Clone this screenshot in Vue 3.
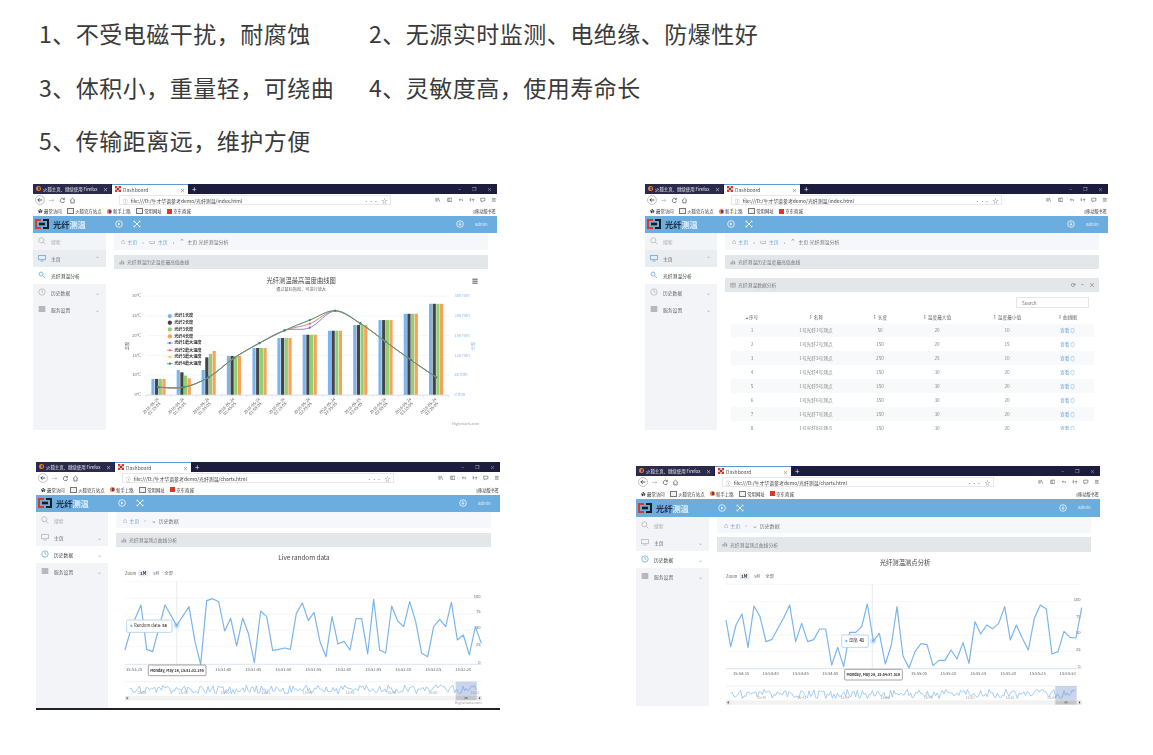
<template>
  <div class="page">
    <div class="points">
      <p v-for="(t, i) in points" :key="i">{{ t }}</p>
    </div>

    <div v-for="(row, r) in rows" :key="r" class="shots" :class="'shots' + r">
      <div v-for="w in row" :key="w.id" class="win" :class="w.id">
        <div class="tabs">
          <div class="tab dark">
            <i class="fox"></i><span>火狐主页、继续使用 Firefox</span><b>×</b>
          </div>
          <div class="tab light">
            <svg class="fav" viewBox="0 0 10 10"><rect x="0" y="0" width="4" height="4" fill="#d8392b"/><rect x="6" y="0" width="4" height="4" fill="#d8392b"/><rect x="0" y="6" width="4" height="4" fill="#d8392b"/><rect x="6" y="6" width="4" height="4" fill="#d8392b"/><rect x="3.5" y="3.5" width="3" height="3" fill="#333"/></svg>
            <span>Dashboard</span><b>×</b>
          </div>
          <span class="plus">+</span>
          <div class="ctrl"><span>−</span><span>❐</span><span>×</span></div>
        </div>

        <div class="navbar">
          <svg class="back" viewBox="0 0 12 12"><circle cx="6" cy="6" r="5.4" fill="#fff" stroke="#999" stroke-width=".7"/><path d="M8.8 6H3.4M5.6 3.8 3.4 6l2.2 2.2" fill="none" stroke="#222" stroke-width=".9"/></svg>
          <svg class="nb" viewBox="0 0 12 12"><path d="M2 6h8M7.5 3.5 10 6l-2.5 2.5" fill="none" stroke="#aaa" stroke-width="1"/></svg>
          <svg class="nb" viewBox="0 0 12 12"><path d="M9.6 6.5A3.7 3.7 0 1 1 8.5 3.3M9.4 1.4v2.7H6.7" fill="none" stroke="#333" stroke-width="1"/></svg>
          <svg class="nb" viewBox="0 0 12 12"><path d="M1.5 6.2 6 2l4.5 4.2M3.2 5.5v4.7h5.6V5.5" fill="none" stroke="#333" stroke-width="1"/></svg>
          <div class="url">
            <span class="info">ⓘ</span><span>{{ w.url }}</span>
            <span class="grow"></span><span class="more">···</span><span class="star">☆</span>
          </div>
          <div class="tools">
            <svg v-for="(d, k) in toolIcons" :key="k" viewBox="0 0 12 12"><path :d="d" fill="none" stroke="#444" stroke-width="1.1"/></svg>
          </div>
        </div>

        <div class="marks">
          <span><em class="gear">✿</em>最常访问</span>
          <span><em class="folder"></em>火狐官方站点</span>
          <span><i class="fox"></i>新手上路</span>
          <span><em class="folder"></em>常用网址</span>
          <span><em class="jd"></em>京东商城</span>
          <span class="grow"></span>
          <span class="mobile">▯移动版书签</span>
        </div>

        <div class="head">
          <svg class="logo" viewBox="0 0 14 10"><path d="M6 1H1v8h5" fill="none" stroke="#d8392b" stroke-width="2"/><path d="M8 1h5v8H8" fill="none" stroke="#1c1c1c" stroke-width="2"/><rect x="4" y="3.7" width="6" height="2.6" fill="#1c1c1c"/></svg>
          <span class="brand">光纤<u>测温</u></span>
          <svg class="hi first" viewBox="0 0 12 12"><circle cx="6" cy="6" r="5" fill="none" stroke="#fff" stroke-width="1.1"/><path d="M4.7 3.7 7.8 6 4.7 8.3z" fill="#fff"/></svg>
          <svg class="hi" viewBox="0 0 12 12"><path d="M2 2l8 8M10 2l-8 8" stroke="#fff" stroke-width="1.3"/><path d="M1 1h3L1 4zM11 1H8l3 3zM1 11h3l-3-3zM11 11H8l3-3z" fill="#fff"/></svg>
          <span class="grow"></span>
          <svg class="hi" viewBox="0 0 12 12"><circle cx="6" cy="6" r="5" fill="none" stroke="#fff" stroke-width="1.1"/><path d="M6 2.8v5M3.8 5.8 6 8l2.2-2.2" fill="none" stroke="#fff" stroke-width="1.1"/></svg>
          <span class="admin">admin</span>
        </div>

        <div class="main">
          <aside class="side">
            <div class="item search">
              <svg class="si" viewBox="0 0 12 12"><circle cx="5" cy="5" r="3.8" fill="none" stroke="#aaa" stroke-width="1"/><path d="M8 8l3 3" stroke="#aaa" stroke-width="1"/></svg>
              <span class="lbl">搜索</span>
            </div>
            <div v-for="m in w.menu" :key="m.label" class="item" :class="{ on: m.on, sub: m.sub }">
              <svg class="si" viewBox="0 0 12 12">
                <g v-if="m.icon === 'screen'" fill="none" :stroke="m.blue ? '#4c9ad8' : '#aaa'" stroke-width="1"><rect x="1" y="2" width="10" height="6.6"/><path d="M3.5 10.5h5"/></g>
                <g v-else-if="m.icon === 'find'" fill="none" stroke="#6aa8dc" stroke-width="1.2"><circle cx="4.6" cy="4.6" r="3"/><path d="M7 7l3.8 3.8"/></g>
                <g v-else-if="m.icon === 'clock'" fill="none" :stroke="m.blue ? '#4c9ad8' : '#aaa'" stroke-width="1"><circle cx="6" cy="6" r="4.8"/><path d="M6 3v3l2 1"/></g>
                <rect v-else x="1" y="1.5" width="10" height="9" fill="#b5b9bd"/>
              </svg>
              <span class="lbl">{{ m.label }}</span>
              <span class="grow"></span>
              <span v-if="!m.tail" class="chev">{{ m.open ? '⌃' : '⌄' }}</span>
            </div>
          </aside>

          <section class="content">
            <div class="crumb">
              <span v-for="(c, k) in w.crumbs" :key="k" :class="{ link: c.link }"><i v-if="c.icon" class="cic">{{ c.icon }}</i>{{ c.text }}</span>
            </div>

            <div class="phead">
              <svg class="ph" viewBox="0 0 10 10"><path d="M1 9V5h1.6v4zM4 9V2h1.6v7zM7 9V4h1.6v5z" fill="#8c8f93"/></svg>
              <span>{{ w.panel }}</span>
            </div>

            <!-- 折线柱状图 -->
            <svg v-if="w.kind === 'combo'" class="chart" viewBox="12 -3 1125 483">
              <text x="575" y="37" class="tt" text-anchor="middle">光纤测温最高温度曲线图</text>
              <text x="575" y="63" class="sm" text-anchor="middle">通过鼠标拖松，可进行放大</text>
              <path d="M1090 27h16M1090 33h16M1090 39h16" stroke="#555" stroke-width="3"/>
              <g v-for="(g, k) in comboGrid" :key="k">
                <path :d="`M108 ${g.y}H1020`" stroke="#eef0f3" stroke-width="2"/>
                <text x="93" :y="g.y + 4" class="sm" text-anchor="end">{{ g.l }}</text>
                <text x="1036" :y="g.y + 4" class="sm blue">{{ g.r }}</text>
              </g>
              <text class="sm" transform="translate(56 228) rotate(-90)" text-anchor="middle">温度</text>
              <text class="sm blue" transform="translate(1098 228) rotate(-90)" text-anchor="middle">长度</text>
              <g v-for="b in comboBars" :key="b.id">
                <rect :x="b.x" :y="b.y" width="9.6" :height="375 - b.y" :fill="b.c" />
              </g>
              <path d="M108 376H1020" stroke="#ccd6eb" stroke-width="2"/>
              <path v-for="x in comboTicks" :key="x" :d="`M${x} 376v8`" stroke="#ccd6eb" stroke-width="1.5"/>
              <g v-for="s in comboLines" :key="s.c">
                <path :d="s.d" fill="none" :stroke="s.c" stroke-width="2.6"/>
                <circle v-for="(p, k) in s.pts" :key="k" :cx="p[0]" :cy="p[1]" r="3.4" :fill="s.c"/>
              </g>
              <g v-for="(l, k) in comboLabels" :key="k" :transform="`translate(${l.x} 389) rotate(-45)`">
                <text class="sm" text-anchor="end">2018-05-24</text>
                <text class="sm" y="13" x="-6" text-anchor="end">{{ l.t }}</text>
              </g>
              <g v-for="(l, k) in comboLegend" :key="k">
                <circle v-if="k < 4" cx="180" :cy="l.y" r="6.5" :fill="l.c"/>
                <g v-else><path :d="`M171 ${l.y}h18`" :stroke="l.c" stroke-width="2"/><circle cx="180" :cy="l.y" r="3.5" :fill="l.c"/></g>
                <text x="193" :y="l.y + 4" class="lg">{{ l.t }}</text>
              </g>
              <text x="1110" y="466" class="hc" text-anchor="end">Highcharts.com</text>
            </svg>

            <!-- 数据表 -->
            <template v-else-if="w.kind === 'table'">
              <div class="phead second">
                <svg class="ph" viewBox="0 0 10 10"><path d="M1 2h8v6.5H1zM1 4h8M3.8 2v6.5M6.4 2v6.5" fill="none" stroke="#8c8f93" stroke-width=".8"/></svg>
                <span>光纤测温数据分析</span>
                <span class="grow"></span>
                <span class="pbtn">⟳</span><span class="pbtn">−</span><span class="pbtn">×</span>
              </div>
              <div class="tbody">
                <div class="searchbox">Search</div>
                <table>
                  <colgroup><col v-for="c in colWidths" :key="c" :style="{ width: c + 'px' }"></colgroup>
                  <thead>
                    <tr><th v-for="(h, k) in columns" :key="h"><small>{{ k === 0 ? '▴' : '↕' }}</small> {{ h }}</th></tr>
                  </thead>
                  <tbody>
                    <tr v-for="(d, k) in tableRows" :key="k">
                      <td>{{ k + 1 }}</td>
                      <td>1号光纤{{ k + 1 }}号测点</td>
                      <td>{{ d[0] }}</td>
                      <td>{{ d[1] }}</td>
                      <td>{{ d[2] }}</td>
                      <td class="see">查看 ◎</td>
                    </tr>
                  </tbody>
                </table>
              </div>
            </template>

            <!-- 实时曲线 -->
            <svg v-else class="chart" :viewBox="w.live.box">
              <text :x="w.live.titleX" :y="w.live.titleY" class="tt" text-anchor="middle">{{ w.live.title }}</text>
              <text :x="w.live.x0" :y="w.live.btnY + 4" class="sm">Zoom</text>
              <rect :x="w.live.x0 + 40" :y="w.live.btnY - 9" width="30" height="18" fill="#e6ebf5"/>
              <text :x="w.live.x0 + 55" :y="w.live.btnY + 4" class="sm b" text-anchor="middle">1M</text>
              <text :x="w.live.x0 + 93" :y="w.live.btnY + 4" class="sm" text-anchor="middle">5M</text>
              <text :x="w.live.x0 + 131" :y="w.live.btnY + 4" class="sm" text-anchor="middle">全部</text>

              <path v-for="y in w.live.grid" :key="y" :d="`M${w.live.x0} ${y}H${w.live.x1}`" stroke="#eef0f3" stroke-width="1.6"/>
              <path :d="`M${w.live.x0} ${w.live.base}H${w.live.x1}`" stroke="#ccd6eb" stroke-width="2"/>
              <text v-for="(y, k) in [...w.live.grid.slice(1), w.live.base]" :key="'v' + k" :x="w.live.x1 - 3" :y="y - 2" class="sm" text-anchor="end">{{ 100 - k * 25 }}</text>
              <text v-for="l in w.live.xlabels" :key="l[1]" :x="l[0]" :y="w.live.base + 19" class="sm" text-anchor="middle">{{ l[1] }}</text>

              <path :d="`M${w.live.cross} ${w.live.grid[0]}V${w.live.base}`" stroke="#d8dbe0" stroke-width="1.6"/>
              <path :d="polyline(w.live.pts)" fill="none" stroke="#7cb5ec" stroke-width="3.6" stroke-linejoin="round"/>
              <circle :cx="w.live.mark[0]" :cy="w.live.mark[1]" r="10" fill="#7cb5ec" opacity=".25"/>
              <circle :cx="w.live.mark[0]" :cy="w.live.mark[1]" r="4" fill="#7cb5ec"/>

              <rect :x="w.live.tip[0]" :y="w.live.tip[1]" :width="w.live.tip[2]" height="37" rx="4" fill="#fff" stroke="#a9cdf0" stroke-width="2.4"/>
              <circle :cx="w.live.tip[0] + 14" :cy="w.live.tip[1] + 18" r="3.4" fill="#7cb5ec"/>
              <text :x="w.live.tip[0] + 22" :y="w.live.tip[1] + 22" class="sm dk">{{ w.live.tipName }}: <tspan class="b">{{ w.live.tipVal }}</tspan></text>

              <rect :x="w.live.time[0]" :y="w.live.base + 2" width="173" height="32" rx="3" fill="#fff" stroke="#777" stroke-width="2"/>
              <text :x="w.live.time[0] + 86" :y="w.live.base + 22" class="xs b" text-anchor="middle">{{ w.live.timeText }}</text>

              <path :d="`M${w.live.x0} ${w.live.nav}H${w.live.x1}`" stroke="#e6e8ec" stroke-width="1.6"/>
              <path :d="polyline(w.live.mini)" fill="none" stroke="#8fc0ee" stroke-width="2.4"/>
              <text v-for="l in w.live.navLabels" :key="l[1]" :x="l[0]" :y="w.live.nav + 38" class="xs gray" text-anchor="middle">{{ l[1] }}</text>
              <rect :x="w.live.sel[0]" :y="w.live.nav" :width="w.live.sel[1]" height="43" fill="#6685c2" opacity=".35"/>
              <rect :x="w.live.x0" :y="w.live.nav + 43" :width="w.live.x1 - w.live.x0" height="13" fill="#f2f2f2"/>
              <rect :x="w.live.sel[0]" :y="w.live.nav + 43" :width="w.live.sel[1]" height="13" fill="#c4c6ca"/>
              <rect :x="w.live.x0" :y="w.live.nav + 43" width="13" height="13" fill="#e4e4e4"/>
              <rect :x="w.live.x1 - 13" :y="w.live.nav + 43" width="13" height="13" fill="#e4e4e4"/>
              <path :d="`M${w.live.x0 + 8} ${w.live.nav + 46}l-4 3.5 4 3.5z`" fill="#333"/>
              <path :d="`M${w.live.x1 - 8} ${w.live.nav + 46}l4 3.5-4 3.5z`" fill="#333"/>
              <path :d="`M${w.live.sel[0] + w.live.sel[1] / 2 - 5} ${w.live.nav + 47.5}h10M${w.live.sel[0] + w.live.sel[1] / 2 - 5} ${w.live.nav + 50.5}h10`" stroke="#555" stroke-width="1.4"/>
              <text v-if="w.id === 'w3'" x="1115" y="401" class="hc" text-anchor="end">Highcharts.com</text>
            </svg>
          </section>
        </div>
      </div>
    </div>
  </div>
</template>

<script setup>
const points = [
  '1、不受电磁干扰，耐腐蚀',
  '2、无源实时监测、电绝缘、防爆性好',
  '3、体积小，重量轻，可绕曲',
  '4、灵敏度高，使用寿命长',
  '5、传输距离远，维护方便',
]

const toolIcons = [
  'M2 2v8M4.5 2v8M7 2l3 8',
  'M1.5 2.5h9v7h-9zM4.5 2.5v7',
  'M10 9V6H3M5 3.5 2.5 6 5 8.5',
  'M3 2v6l-2-2M3 8l2-2M9 10V4l-2 2M9 4l2 2',
  'M1.5 2.5h9v6H6l-2.5 2V8.5h-2z',
  'M2 3h8M2 6h8M2 9h8',
]

const polyline = (pts) => 'M' + pts.map((p) => p.join(' ')).join('L')

// catmull-rom 平滑
const smooth = (pts) => {
  let d = `M${pts[0][0]} ${pts[0][1]}`
  for (let i = 0; i < pts.length - 1; i++) {
    const p0 = pts[i - 1] || pts[i]
    const p1 = pts[i]
    const p2 = pts[i + 1]
    const p3 = pts[i + 2] || p2
    const c1 = [p1[0] + (p2[0] - p0[0]) / 6, p1[1] + (p2[1] - p0[1]) / 6]
    const c2 = [p2[0] - (p3[0] - p1[0]) / 6, p2[1] - (p3[1] - p1[1]) / 6]
    d += `C${c1[0]} ${c1[1]} ${c2[0]} ${c2[1]} ${p2[0]} ${p2[1]}`
  }
  return d
}

const comboGrid = [
  { y: 78, l: '30°C', r: '300 mm' },
  { y: 138, l: '25°C', r: '240 mm' },
  { y: 197, l: '20°C', r: '180 mm' },
  { y: 256, l: '15°C', r: '120 mm' },
  { y: 315, l: '10°C', r: '60 mm' },
  { y: 375, l: '0°C', r: '0 mm' },
]
const centers = [146, 222, 297, 373, 450, 525, 601, 677, 753, 829, 905, 981]
const tops = [
  [327, 327, 327, 327],
  [300, 307, 317, 325],
  [300, 262, 252, 243],
  [258, 258, 258, 258],
  [234, 234, 234, 234],
  [204, 204, 204, 204],
  [194, 194, 194, 194],
  [182, 182, 182, 182],
  [165, 165, 165, 165],
  [150, 150, 150, 150],
  [131, 131, 131, 131],
  [101, 101, 101, 101],
]
const barColors = ['#7cb5ec', '#434348', '#90d070', '#f7a35c']
const comboBars = centers.flatMap((x, g) =>
  tops[g].map((y, k) => ({ id: g + '-' + k, x: x - 21.5 + k * 11, y, c: barColors[k] })),
)
const comboTicks = [108, 184, 260, 336, 412, 488, 563, 639, 715, 791, 867, 943, 1019]
const lineY = [352, 352, 322, 264, 219, 181, 150, 122, 160, 215, 270, 322]
const comboLines = [
  { c: '#7070cc', at6: 173 },
  { c: '#e8607c', at6: 161 },
  { c: '#e8c94a', at6: 150 },
  { c: '#2f8f86', at6: 150 },
].map((s) => {
  const pts = centers.map((x, i) => [x, i === 6 ? s.at6 : lineY[i]])
  return { c: s.c, pts, d: smooth(pts) }
})
const times = ['01:15:05', '01:25:05', '01:35:05', '01:45:05', '01:55:05', '02:15:05', '02:25:05', '02:35:05', '02:45:05', '02:55:05', '03:15:05', '03:25:05']
const comboLabels = centers.map((x, i) => ({ x: x + 2, t: times[i] }))
const comboLegend = [
  { y: 138, c: '#7cb5ec', t: '光纤1长度' },
  { y: 158, c: '#434348', t: '光纤2长度' },
  { y: 178, c: '#90d070', t: '光纤3长度' },
  { y: 199, c: '#f7a35c', t: '光纤4长度' },
  { y: 219, c: '#7070cc', t: '光纤1最大温度' },
  { y: 241, c: '#e8607c', t: '光纤2最大温度' },
  { y: 261, c: '#e8c94a', t: '光纤3最大温度' },
  { y: 281, c: '#2f8f86', t: '光纤4最大温度' },
]

const columns = ['序号', '名称', '长度', '温度最大值', '温度最小值', '曲线图']
const colWidths = [42, 86, 42, 72, 68, 53]
const tableRows = [
  [50, 20, 10],
  [150, 20, 15],
  [250, 25, 10],
  [350, 30, 20],
  [350, 30, 20],
  [350, 30, 20],
  [350, 30, 20],
  [350, 30, 20],
]

const noise = (i) => {
  const v = Math.sin(i * 12.9898 + 4.1) * 43758.5453
  return v - Math.floor(v)
}
const miniLine = (x0, x1, top, bottom) => {
  const pts = []
  for (let x = x0 + 14, i = 0; x <= x1 - 14; x += 5, i++) {
    pts.push([x, +(top + noise(i) * (bottom - top)).toFixed(1)])
  }
  return pts
}

const ys3 = [240, 170, 105, 238, 245, 105, 167, 110, 215, 283, 92, 86, 95, 183, 145, 228, 145, 190, 278, 123, 140, 241, 238, 234, 238, 130, 99, 152, 127, 215, 260, 140, 222, 214, 240, 146, 146, 252, 88, 240, 249, 108, 153, 170, 95, 155, 250, 260, 170, 148, 170, 97, 210, 195, 255, 170, 220]
const xs3 = [45, 65, 93, 110, 128, 165, 200, 237, 255, 272, 290, 308, 326, 344, 362, 380, 398, 415, 433, 452, 470, 488, 506, 524, 541, 559, 577, 595, 612, 630, 648, 666, 684, 702, 720, 738, 755, 773, 791, 809, 827, 845, 863, 881, 899, 917, 935, 953, 971, 989, 1007, 1024, 1042, 1060, 1078, 1096, 1114]
const pts4 = [[33,150],[47,230],[63,165],[81,132],[99,232],[117,108],[135,140],[153,215],[171,208],[189,175],[207,142],[224,105],[242,215],[260,160],[278,215],[296,209],[314,177],[332,177],[350,285],[368,232],[386,290],[404,187],[422,187],[440,170],[457,102],[475,213],[493,190],[511,282],[529,225],[546,110],[564,258],[582,294],[600,245],[618,221],[636,224],[654,287],[672,271],[690,271],[708,240],[726,267],[744,218],[762,280],[780,155],[797,192],[815,165],[833,176],[851,160],[869,110],[886,210],[904,165],[922,205],[940,240],[958,145],[976,105],[994,117],[1011,252],[1029,245],[1047,184],[1065,202],[1083,204],[1100,113]]

const menuHome = [
  { label: '主页', icon: 'screen', blue: true, on: true, open: true },
  { label: '光纤测温分析', icon: 'find', sub: true, tail: true },
  { label: '历史数据', icon: 'clock' },
  { label: '服务设置', icon: 'box' },
]
const menuHistory = [
  { label: '主页', icon: 'screen' },
  { label: '历史数据', icon: 'clock', blue: true, sub: true },
  { label: '服务设置', icon: 'box' },
]
const crumbHome = [
  { icon: '⌂', text: '主页', link: true },
  { text: '›' },
  { icon: '▭', text: '主页', link: true },
  { text: '›' },
  { icon: '⌃', text: '主页 光纤测温分析' },
]
const crumbHistory = [
  { icon: '⌂', text: '主页', link: true },
  { text: '›' },
  { icon: '⌄', text: '历史数据' },
]

const rows = [
  [
    {
      id: 'w1',
      kind: 'combo',
      url: 'file:///D:/牛才华谱参考demo/光纤测温/index.html',
      menu: menuHome,
      crumbs: crumbHome,
      panel: '光纤测温历史温度最高值曲线',
    },
    {
      id: 'w2',
      kind: 'table',
      url: 'file:///D:/牛才华谱参考demo/光纤测温/index.html',
      menu: menuHome,
      crumbs: crumbHome,
      panel: '光纤测温历史温度最高值曲线',
    },
  ],
  [
    {
      id: 'w3',
      kind: 'live',
      url: 'file:///D:/牛才华谱参考demo/光纤测温/charts.html',
      menu: menuHistory,
      crumbs: crumbHistory,
      panel: '光纤测温测点曲线分析',
      live: {
        box: '18 -69 1125 483',
        title: 'Live random data',
        titleX: 582,
        titleY: -30,
        btnY: 10,
        x0: 45,
        x1: 1115,
        grid: [35, 85, 132, 180, 230],
        base: 283,
        cross: 200,
        pts: xs3.map((x, i) => [x, ys3[i]]),
        mark: [200, 167],
        tip: [50, 150, 136],
        tipName: 'Random data',
        tipVal: '58',
        time: [115],
        timeText: 'Monday, May 28, 15:51:32.195',
        xlabels: [[72, '15:51:25'], [340, '15:51:40'], [430, '15:51:45'], [520, '15:51:50'], [610, '15:51:55'], [700, '15:52:00'], [790, '15:52:05'], [880, '15:52:10'], [970, '15:52:15'], [1060, '15:52:20']],
        nav: 335,
        mini: miniLine(45, 1115, 345, 372),
        navLabels: [[95, '15:36'], [220, '15:38'], [345, '15:40'], [468, '15:42'], [592, '15:44'], [720, '15:46'], [845, '15:48'], [968, '15:50'], [1095, '15:52']],
        sel: [1037, 63],
      },
    },
    {
      id: 'w4',
      kind: 'live',
      url: 'file:///D:/牛才华谱参考demo/光纤测温/charts.html',
      menu: menuHistory,
      crumbs: crumbHistory,
      panel: '光纤测温测点曲线分析',
      live: {
        box: '6 -54 1122 462',
        title: '光纤测温测点分析',
        titleX: 570,
        titleY: -16,
        btnY: 19,
        x0: 33,
        x1: 1100,
        grid: [43, 95, 145, 195, 245],
        base: 296,
        cross: 472,
        pts: pts4,
        mark: [475, 213],
        tip: [380, 195, 80],
        tipName: '温度',
        tipVal: '41',
        time: [389],
        timeText: 'Monday, May 28, 15:54:57.516',
        xlabels: [[78, '15:54:35'], [167, '15:54:40'], [257, '15:54:45'], [346, '15:54:50'], [612, '15:55:05'], [700, '15:55:10'], [790, '15:55:15'], [880, '15:55:20'], [968, '15:55:25'], [1058, '15:55:30']],
        nav: 348,
        mini: miniLine(33, 1100, 358, 386),
        navLabels: [[140, '15:40'], [260, '15:42'], [390, '15:44'], [510, '15:46'], [640, '15:48'], [765, '15:50'], [885, '15:52'], [1010, '15:54']],
        sel: [1021, 64],
      },
    },
  ],
]
</script>

<style scoped>
.page {
  width: 1153px;
  height: 755px;
  overflow: hidden;
  background: #fff;
  font-family: "Noto Sans CJK SC", "Liberation Sans", sans-serif;
}
.points {
  display: grid;
  grid-template-columns: 330px auto;
  padding: 7px 0 16px 39px;
}
.points p {
  margin: 0;
  font-size: 23px;
  line-height: 53.5px;
  letter-spacing: 0.5px;
  color: #3a3a3a;
}
.shots {
  display: flex;
  align-items: flex-start;
}
.shots0 {
  padding-left: 33px;
  gap: 148px;
  margin-bottom: 32px;
}
.shots1 {
  padding-left: 36px;
  gap: 136px;
}
.win {
  width: 464px;
  height: 246px;
  display: flex;
  flex-direction: column;
  overflow: hidden;
  flex: none;
  background: #fff;
  filter: blur(0.3px);
}
.w2 {
  width: 463px;
}
.w3 {
  border-bottom: 2px solid #222;
}
.w4 {
  height: 240px;
  margin-top: 4px;
}
.grow {
  flex: 1;
}

.tabs {
  height: 10px;
  flex: none;
  display: flex;
  align-items: stretch;
  background: #1c1c3e;
  font-size: 5px;
  color: #eee;
}
.tab {
  display: flex;
  align-items: center;
  gap: 2px;
  padding: 0 3px;
  box-sizing: border-box;
}
.tab span {
  flex: 1;
  white-space: nowrap;
}
.tab b {
  font-weight: 400;
  font-size: 5px;
}
.tab.dark {
  width: 78px;
  font-size: 4.4px;
  background: #2a2a4c;
}
.tab.light {
  width: 76px;
  margin-left: 1px;
  background: #fff;
  color: #555;
  border-top: 1px solid #5d9bd8;
}
.fox {
  display: inline-block;
  width: 5px;
  height: 5px;
  flex: none;
  border-radius: 50%;
  background: radial-gradient(circle at 60% 50%, #5a3a9c 30%, #f08020 36%);
}
.fav {
  width: 6px;
  height: 6px;
  flex: none;
}
.plus {
  margin-left: 4px;
  font-size: 8px;
  line-height: 10px;
}
.ctrl {
  margin-left: auto;
  display: flex;
  gap: 11px;
  padding-right: 5px;
  font-size: 5px;
  line-height: 10px;
  color: #bbb;
}

.navbar {
  height: 13px;
  flex: none;
  display: flex;
  align-items: center;
  padding-left: 2px;
  background: #fff;
}
.back {
  width: 10px;
  height: 10px;
}
.nb {
  width: 7px;
  height: 7px;
  margin-left: 3.5px;
}
.url {
  width: 274px;
  height: 10px;
  margin-left: 42.5px;
  display: flex;
  align-items: center;
  gap: 3px;
  padding: 0 3px;
  box-sizing: border-box;
  border: 1px solid #e8e8e8;
  font-size: 4.9px;
  color: #444;
  white-space: nowrap;
}
.info {
  color: #888;
}
.more {
  color: #555;
}
.star {
  font-size: 6px;
  color: #666;
}
.tools {
  display: flex;
  gap: 5.6px;
  margin-left: 44px;
}
.tools svg {
  width: 5.6px;
  height: 5.6px;
}

.marks {
  height: 9px;
  flex: none;
  display: flex;
  align-items: center;
  gap: 5px;
  padding-left: 5px;
  font-size: 4.4px;
  color: #333;
  white-space: nowrap;
}
.w3 .marks,
.w4 .marks {
  height: 10px;
}
.marks span {
  display: flex;
  align-items: center;
  gap: 1.5px;
}
.marks em {
  font-style: normal;
}
.gear {
  font-size: 4.6px;
}
.folder {
  width: 5px;
  height: 4px;
  border: 0.6px solid #777;
  background: #f2f2f2;
}
.jd {
  width: 5px;
  height: 5px;
  background: #d8392b;
}
.mobile {
  padding-right: 1px;
  font-size: 4.2px;
}

.head {
  height: 17px;
  flex: none;
  display: flex;
  align-items: center;
  padding-left: 2px;
  background: #6badde;
}
.w4 .head {
  height: 18px;
}
.logo {
  width: 14px;
  height: 10px;
}
.brand {
  width: 62px;
  margin-left: 4px;
  font-size: 8.2px;
  font-weight: 700;
  color: #1e2f44;
}
.brand u {
  text-decoration: none;
  color: #e4f0fa;
}
.hi {
  width: 8px;
  height: 8px;
}
.hi.first {
  margin-right: 10px;
}
.admin {
  width: 22px;
  margin-left: 11px;
  font-family: "Liberation Sans", sans-serif;
  font-size: 4.6px;
  color: #dbeaf6;
}

.main {
  flex: 1;
  min-height: 0;
  display: flex;
}
.side {
  width: 73px;
  flex: none;
  background: #f2f4f7;
}
.w2 .side,
.w3 .side {
  width: 72px;
}
.item {
  height: 17px;
  display: flex;
  align-items: center;
  padding: 0 6px 0 5px;
  font-size: 4.8px;
  color: #666;
}
.item.on {
  background: #eaedf0;
}
.item.sub {
  background: #fff;
  color: #444;
}
.si {
  width: 8px;
  height: 8px;
  flex: none;
  margin-right: 5px;
}
.lbl {
  white-space: nowrap;
}
.search .lbl {
  color: #aaa;
}
.chev {
  font-size: 6px;
  color: #aaa;
}
.content {
  flex: 1;
  min-width: 0;
  padding: 0 9px 0 8px;
  display: flex;
  flex-direction: column;
}
.crumb {
  height: 17px;
  flex: none;
  display: flex;
  align-items: center;
  gap: 5px;
  padding-left: 7px;
  margin-bottom: 5px;
  background: #f5f7fa;
  font-size: 5px;
  color: #777;
  white-space: nowrap;
}
.w3 .crumb,
.w4 .crumb {
  height: 16px;
}
.w4 .crumb {
  margin-bottom: 4px;
}
.cic {
  margin-right: 2px;
  font-size: 7px;
  font-style: normal;
  color: #8a8f94;
}
.link {
  color: #7aa9d3;
}
.phead {
  height: 14px;
  flex: none;
  display: flex;
  align-items: center;
  gap: 2px;
  padding: 0 4px 0 5px;
  background: #e4e7ea;
  font-size: 4.8px;
  color: #777;
  white-space: nowrap;
}
.w4 .phead {
  height: 15px;
}
.ph {
  width: 6px;
  height: 6px;
}
.phead.second {
  margin-top: 9px;
}
.pbtn {
  margin-left: 3px;
  font-size: 6px;
  color: #666;
}
.chart {
  flex: 1;
  min-height: 0;
  width: 100%;
  display: block;
}
.tt {
  font-size: 19px;
  fill: #444;
}
.sm {
  font-size: 12.5px;
  fill: #666;
}
.xs {
  font-size: 11px;
  fill: #333;
}
.lg {
  font-size: 12.5px;
  font-weight: 700;
  fill: #333;
}
.hc {
  font-size: 11px;
  fill: #999;
}
.blue {
  fill: #8fb9e8;
}
.b {
  font-weight: 700;
  fill: #333;
}
.dk {
  fill: #333;
}
.gray {
  fill: #aaa;
}
.tbody {
  flex: 1;
  min-height: 0;
  overflow: hidden;
  padding: 5px 5px 0 6px;
}
.searchbox {
  width: 73px;
  height: 11px;
  box-sizing: border-box;
  margin: 0 5px 3px auto;
  padding-left: 5px;
  border: 0.6px solid #e4e6e8;
  font-size: 4.6px;
  line-height: 10px;
  color: #777;
}
table {
  width: 363px;
  table-layout: fixed;
  border-collapse: collapse;
  font-size: 4.7px;
  color: #888;
}
th {
  height: 13px;
  padding: 0;
  font-weight: 400;
  color: #666;
}
th small {
  font-size: 4px;
}
td {
  height: 13.9px;
  padding: 0;
  text-align: center;
}
tbody tr:nth-child(odd) {
  background: #f8f9fa;
}
.see {
  color: #6fa6da;
}
</style>

<style>
html,
body {
  margin: 0;
  background: #fff;
}
</style>
